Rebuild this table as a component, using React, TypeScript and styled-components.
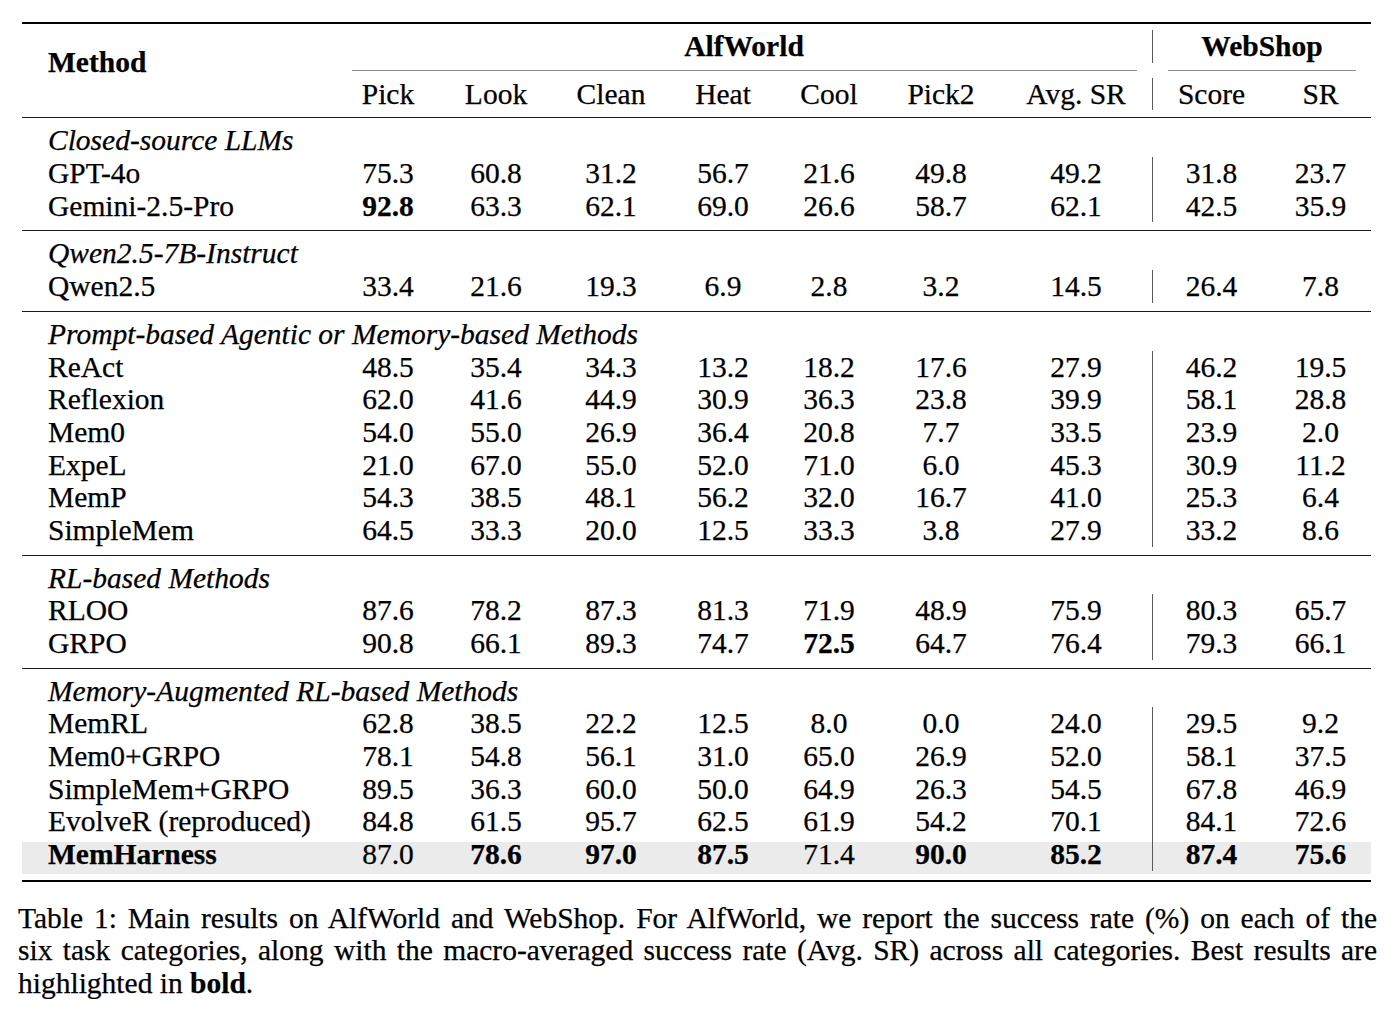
import React from "react";
import styled, { createGlobalStyle, css } from "styled-components";

const COLS = "314px 104px 112px 118px 106px 106px 118px 152px 118px 101px";

const GlobalStyle = createGlobalStyle`
  html, body { margin: 0; padding: 0; background: #ffffff; }
  body {
    font-family: "Liberation Serif", "Times New Roman", serif;
    color: #000000;
    -webkit-text-stroke: 0.25px #000000;
  }
`;

const Page = styled.div`
  padding: 22px 0 0 18px;
  width: 1359px;
`;

const Table = styled.div`
  margin-left: 4px;
  width: 1349px;
  font-size: 29.5px;
  line-height: 32.7px;
`;

const Rule = styled.div<{ $heavy?: boolean }>`
  height: ${(p) => (p.$heavy ? "2px" : "1px")};
  background: ${(p) => (p.$heavy ? "#000000" : "#1a1a1a")};
`;

const Header = styled.div`
  display: grid;
  grid-template-columns: ${COLS};
  grid-template-rows: 32.7px 15px 32.7px;
  padding: 6px 0 7px;
`;

const MethodHead = styled.div`
  grid-column: 1;
  grid-row: 1 / 4;
  align-self: start;
  margin-top: 16px;
  padding-left: 26px;
  font-weight: 700;
`;

const GroupHead = styled.div<{ $col: string; $bar?: boolean }>`
  grid-row: 1;
  grid-column: ${(p) => p.$col};
  text-align: center;
  font-weight: 700;
  ${(p) =>
    p.$bar &&
    css`
      border-left: 1px solid #5a5a5a;
    `}
`;

const CMidRule = styled.div<{ $col: string }>`
  grid-row: 2;
  grid-column: ${(p) => p.$col};
  align-self: start;
  margin: 7px 15px 0 16px;
  height: 1px;
  background: #8a8a8a;
`;

const SubHead = styled.div<{ $col: number; $bar?: boolean }>`
  grid-row: 3;
  grid-column: ${(p) => p.$col};
  text-align: center;
  white-space: nowrap;
  ${(p) =>
    p.$bar &&
    css`
      border-left: 1px solid #5a5a5a;
    `}
`;

const Section = styled.div<{ $last?: boolean }>`
  padding: 6px 0 ${(p) => (p.$last ? "6px" : "8px")};
`;

const SectionTitle = styled.div`
  height: 32.7px;
  padding-left: 26px;
  font-style: italic;
  white-space: nowrap;
`;

const Row = styled.div<{ $highlight?: boolean }>`
  display: grid;
  grid-template-columns: ${COLS};
  height: 32.7px;
  ${(p) =>
    p.$highlight &&
    css`
      padding-bottom: 3px;
      background: linear-gradient(to bottom, #ffffff 0 4px, #ebebeb 4px 100%);
    `}
`;

const NameCell = styled.div<{ $bold?: boolean }>`
  padding-left: 26px;
  white-space: nowrap;
  font-weight: ${(p) => (p.$bold ? 700 : 400)};
`;

const NumCell = styled.div<{ $bold?: boolean; $bar?: boolean }>`
  text-align: center;
  font-weight: ${(p) => (p.$bold ? 700 : 400)};
  ${(p) =>
    p.$bar &&
    css`
      border-left: 1px solid #5a5a5a;
    `}
`;

const Caption = styled.div`
  margin-top: 20px;
  font-size: 29.5px;
  line-height: 32.5px;
`;

const CaptionLine = styled.div<{ $full?: boolean }>`
  text-align: ${(p) => (p.$full ? "justify" : "left")};
  text-align-last: ${(p) => (p.$full ? "justify" : "left")};
`;

type RowData = { name: string; vals: string[]; bold?: boolean; highlight?: boolean };
type SectionData = { title: string; rows: RowData[] };

const sections: SectionData[] = [
  {
    title: "Closed-source LLMs",
    rows: [
      { name: "GPT-4o", vals: ["75.3", "60.8", "31.2", "56.7", "21.6", "49.8", "49.2", "31.8", "23.7"] },
      { name: "Gemini-2.5-Pro", vals: ["*92.8", "63.3", "62.1", "69.0", "26.6", "58.7", "62.1", "42.5", "35.9"] },
    ],
  },
  {
    title: "Qwen2.5-7B-Instruct",
    rows: [{ name: "Qwen2.5", vals: ["33.4", "21.6", "19.3", "6.9", "2.8", "3.2", "14.5", "26.4", "7.8"] }],
  },
  {
    title: "Prompt-based Agentic or Memory-based Methods",
    rows: [
      { name: "ReAct", vals: ["48.5", "35.4", "34.3", "13.2", "18.2", "17.6", "27.9", "46.2", "19.5"] },
      { name: "Reflexion", vals: ["62.0", "41.6", "44.9", "30.9", "36.3", "23.8", "39.9", "58.1", "28.8"] },
      { name: "Mem0", vals: ["54.0", "55.0", "26.9", "36.4", "20.8", "7.7", "33.5", "23.9", "2.0"] },
      { name: "ExpeL", vals: ["21.0", "67.0", "55.0", "52.0", "71.0", "6.0", "45.3", "30.9", "11.2"] },
      { name: "MemP", vals: ["54.3", "38.5", "48.1", "56.2", "32.0", "16.7", "41.0", "25.3", "6.4"] },
      { name: "SimpleMem", vals: ["64.5", "33.3", "20.0", "12.5", "33.3", "3.8", "27.9", "33.2", "8.6"] },
    ],
  },
  {
    title: "RL-based Methods",
    rows: [
      { name: "RLOO", vals: ["87.6", "78.2", "87.3", "81.3", "71.9", "48.9", "75.9", "80.3", "65.7"] },
      { name: "GRPO", vals: ["90.8", "66.1", "89.3", "74.7", "*72.5", "64.7", "76.4", "79.3", "66.1"] },
    ],
  },
  {
    title: "Memory-Augmented RL-based Methods",
    rows: [
      { name: "MemRL", vals: ["62.8", "38.5", "22.2", "12.5", "8.0", "0.0", "24.0", "29.5", "9.2"] },
      { name: "Mem0+GRPO", vals: ["78.1", "54.8", "56.1", "31.0", "65.0", "26.9", "52.0", "58.1", "37.5"] },
      { name: "SimpleMem+GRPO", vals: ["89.5", "36.3", "60.0", "50.0", "64.9", "26.3", "54.5", "67.8", "46.9"] },
      { name: "EvolveR (reproduced)", vals: ["84.8", "61.5", "95.7", "62.5", "61.9", "54.2", "70.1", "84.1", "72.6"] },
      {
        name: "MemHarness",
        bold: true,
        highlight: true,
        vals: ["87.0", "*78.6", "*97.0", "*87.5", "71.4", "*90.0", "*85.2", "*87.4", "*75.6"],
      },
    ],
  },
];

const subHeads = ["Pick", "Look", "Clean", "Heat", "Cool", "Pick2", "Avg. SR", "Score", "SR"];

export default function App() {
  return (
    <Page>
      <GlobalStyle />
      <Table>
        <Rule $heavy />
        <Header>
          <MethodHead>Method</MethodHead>
          <GroupHead $col="2 / 9">AlfWorld</GroupHead>
          <GroupHead $col="9 / 11" $bar>
            WebShop
          </GroupHead>
          <CMidRule $col="2 / 9" />
          <CMidRule $col="9 / 11" />
          {subHeads.map((h, i) => (
            <SubHead key={h} $col={i + 2} $bar={i === 7}>
              {h}
            </SubHead>
          ))}
        </Header>
        {sections.map((s, si) => (
          <React.Fragment key={s.title}>
            <Rule />
            <Section $last={si === sections.length - 1}>
              <SectionTitle>{s.title}</SectionTitle>
              {s.rows.map((r) => (
                <Row key={r.name} $highlight={r.highlight}>
                  <NameCell $bold={r.bold}>{r.name}</NameCell>
                  {r.vals.map((v, i) => (
                    <NumCell key={i} $bold={v.startsWith("*")} $bar={i === 7}>
                      {v.replace("*", "")}
                    </NumCell>
                  ))}
                </Row>
              ))}
            </Section>
          </React.Fragment>
        ))}
        <Rule $heavy />
      </Table>
      <Caption>
        <CaptionLine $full>
          Table 1: Main results on AlfWorld and WebShop. For AlfWorld, we report the success rate (%) on each of the
        </CaptionLine>
        <CaptionLine $full>
          six task categories, along with the macro-averaged success rate (Avg. SR) across all categories. Best results are
        </CaptionLine>
        <CaptionLine>
          highlighted in <b>bold</b>.
        </CaptionLine>
      </Caption>
    </Page>
  );
}
